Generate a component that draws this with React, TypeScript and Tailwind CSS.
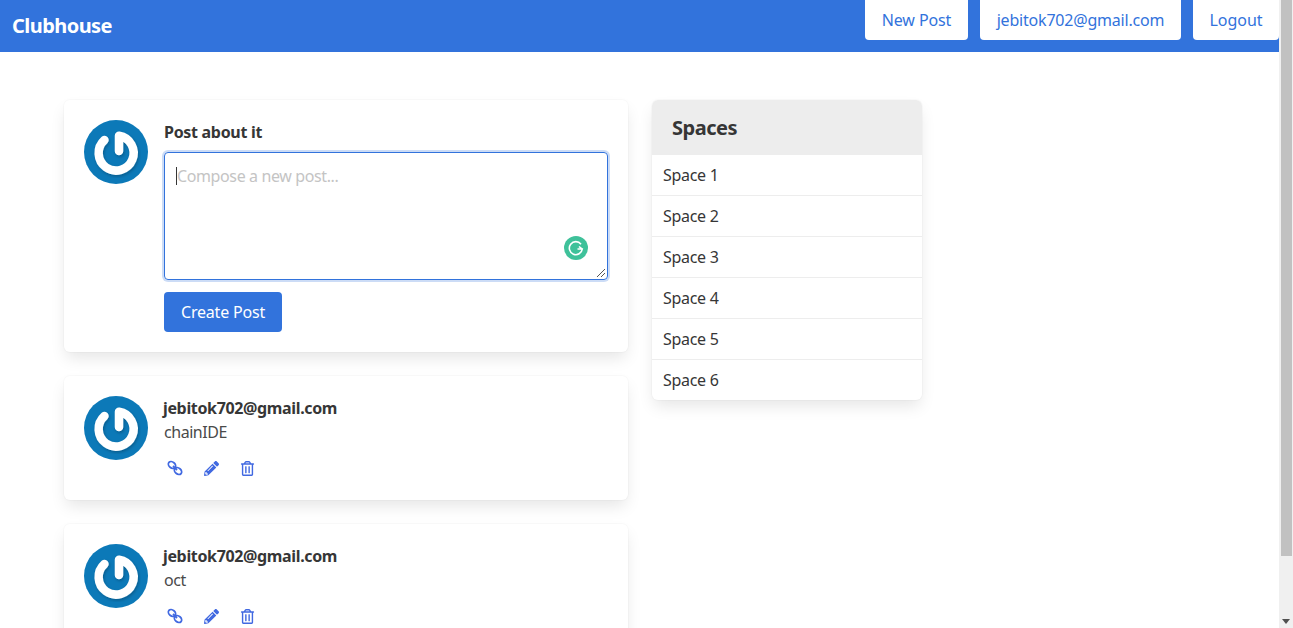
import React from 'react';
import { FaPencilAlt, FaRegTrashAlt } from 'react-icons/fa';

const spaces = ['Space 1', 'Space 2', 'Space 3', 'Space 4', 'Space 5', 'Space 6'];
const posts = [
  { author: 'jebitok702@gmail.com', body: 'chainIDE' },
  { author: 'jebitok702@gmail.com', body: 'oct' },
];

const Avatar = () => (
  <svg viewBox="0 0 64 64" className="w-16 h-16 shrink-0">
    <defs>
      <filter id="soft" x="-20%" y="-20%" width="140%" height="140%">
        <feDropShadow dx="1" dy="1.5" stdDeviation="1.5" floodColor="#000" floodOpacity="0.25" />
      </filter>
    </defs>
    <circle cx="32" cy="32" r="32" fill="#0c79b8" />
    {/* ring opens at upper left, stem drops from the top to the centre */}
    <path
      d="M35 31 V15.8 A17.5 17.5 0 1 1 20.5 20"
      filter="url(#soft)"
      fill="none"
      stroke="#fff"
      strokeWidth="8.5"
      strokeLinecap="round"
      strokeLinejoin="round"
    />
  </svg>
);

const ChainIcon = () => (
  <svg viewBox="0 0 16 16" className="w-4 h-4" fill="none" stroke="currentColor" strokeWidth="1.8">
    <ellipse cx="5" cy="5" rx="4" ry="3" transform="rotate(40 5 5)" />
    <ellipse cx="11" cy="11" rx="4" ry="3" transform="rotate(40 11 11)" />
    <path d="M6 6 L10 10" />
  </svg>
);

const Grammarly = () => (
  <svg viewBox="0 0 24 24" className="absolute right-[20px] bottom-[20px] w-6 h-6">
    <circle cx="12" cy="12" r="12" fill="#3fc19a" />
    <path d="M17 8.2 A6.5 6.5 0 1 0 18.3 13 H13.5 M15 10.5 L18.3 13.2" stroke="#fff" strokeWidth="1.6" fill="none" />
  </svg>
);

export default function App() {
  return (
    <div className="h-[628px] flex overflow-hidden bg-white text-[#363636] font-['Noto_Sans',sans-serif]">
      <div className="flex-1 min-w-0 overflow-hidden">
        {/* Navbar */}
        <nav className="h-[52px] bg-[#3273dc] flex justify-between pl-3">
          <span className="text-white text-[20px] font-bold leading-[52px] tracking-[-0.55px]">Clubhouse</span>
          <div className="flex gap-3 h-10">
            <button className="w-[103px] h-10 bg-white text-[#3273dc] rounded-b tracking-[-0.1px]">New Post</button>
            <button className="w-[201px] h-10 bg-white text-[#3273dc] rounded-b tracking-[-0.2px]">jebitok702@gmail.com</button>
            <button className="w-[86px] h-10 bg-white text-[#3273dc] rounded-b">Logout</button>
          </div>
        </nav>

        <div className="flex items-start gap-6 pl-16 pt-12">
          <div className="w-[564px] flex flex-col gap-6 shrink-0">
            {/* Composer */}
            <div className="h-[252px] rounded-md bg-white p-5 flex gap-4 shadow-[0_8px_16px_-2px_rgba(10,10,10,0.1),0_0_0_1px_rgba(10,10,10,0.02)]">
              <Avatar />
              <div className="flex-1">
                <p className="font-bold leading-6 tracking-[-0.3px]">Post about it</p>
                <div className="relative mt-2 h-32">
                  <div className="h-full rounded border border-[#3273dc] shadow-[0_0_0_2px_rgba(50,115,220,0.25)] px-[11px] pt-[11px] text-[#c4c4c4] leading-6 tracking-[-0.38px]">
                    <span className="inline-block w-px h-[18px] bg-[#363636] align-[-3px]" />Compose a new post...
                  </div>
                  <Grammarly />
                  <svg viewBox="0 0 10 10" className="absolute right-[2px] bottom-[2px] w-2.5 h-2.5">
                    <path d="M1 9 L9 1 M5 9 L9 5" stroke="#555" strokeWidth="1" />
                  </svg>
                </div>
                <button className="mt-3 w-[118px] h-10 rounded bg-[#3273dc] text-white tracking-[-0.2px]">Create Post</button>
              </div>
            </div>

            {/* Posts */}
            {posts.map((post, i) => (
              <div key={i} className="h-[124px] rounded-md bg-white p-5 flex gap-4 shrink-0 shadow-[0_8px_16px_-2px_rgba(10,10,10,0.1),0_0_0_1px_rgba(10,10,10,0.02)]">
                <Avatar />
                <div>
                  <p className="font-bold leading-6 tracking-[-0.35px] -ml-px">{post.author}</p>
                  <p className="leading-6 text-[#4a4a4a] tracking-[-0.45px]">{post.body}</p>
                  <div className="flex gap-3 mt-3 text-[#4169e1] -ml-px">
                    <span className="w-6 h-6 flex items-center justify-center"><ChainIcon /></span>
                    <span className="w-6 h-6 flex items-center justify-center"><FaPencilAlt size={15} /></span>
                    <span className="w-6 h-6 flex items-center justify-center"><FaRegTrashAlt size={15} /></span>
                  </div>
                </div>
              </div>
            ))}
          </div>

          {/* Spaces */}
          <div className="w-[270px] rounded-md overflow-hidden bg-white shadow-[0_8px_16px_-2px_rgba(10,10,10,0.1),0_0_0_1px_rgba(10,10,10,0.02)]">
            <div className="h-[55px] bg-[#ededed] px-5 flex items-center text-[20px] font-bold tracking-[-0.5px]">Spaces</div>
            {spaces.map((s, i) => (
              <div key={s} className={i < 5 ? 'h-[41px] pl-[11px] flex items-center tracking-[-0.3px] border-b border-[#ededed]' : 'h-10 pl-[11px] flex items-center tracking-[-0.3px]'}>{s}</div>
            ))}
          </div>
        </div>
      </div>

      {/* Scrollbar */}
      <div className="w-[14px] shrink-0 bg-[#f0f0f0] flex flex-col justify-between pl-0.5">
        <div className="w-[11px] h-[556px] bg-[#c1c1c1]" />
        <svg viewBox="0 0 8 5" className="w-2 h-[5px] mb-[4px] ml-px">
          <path d="M0 0 H8 L4 5 Z" fill="#505050" />
        </svg>
      </div>
    </div>
  );
}
